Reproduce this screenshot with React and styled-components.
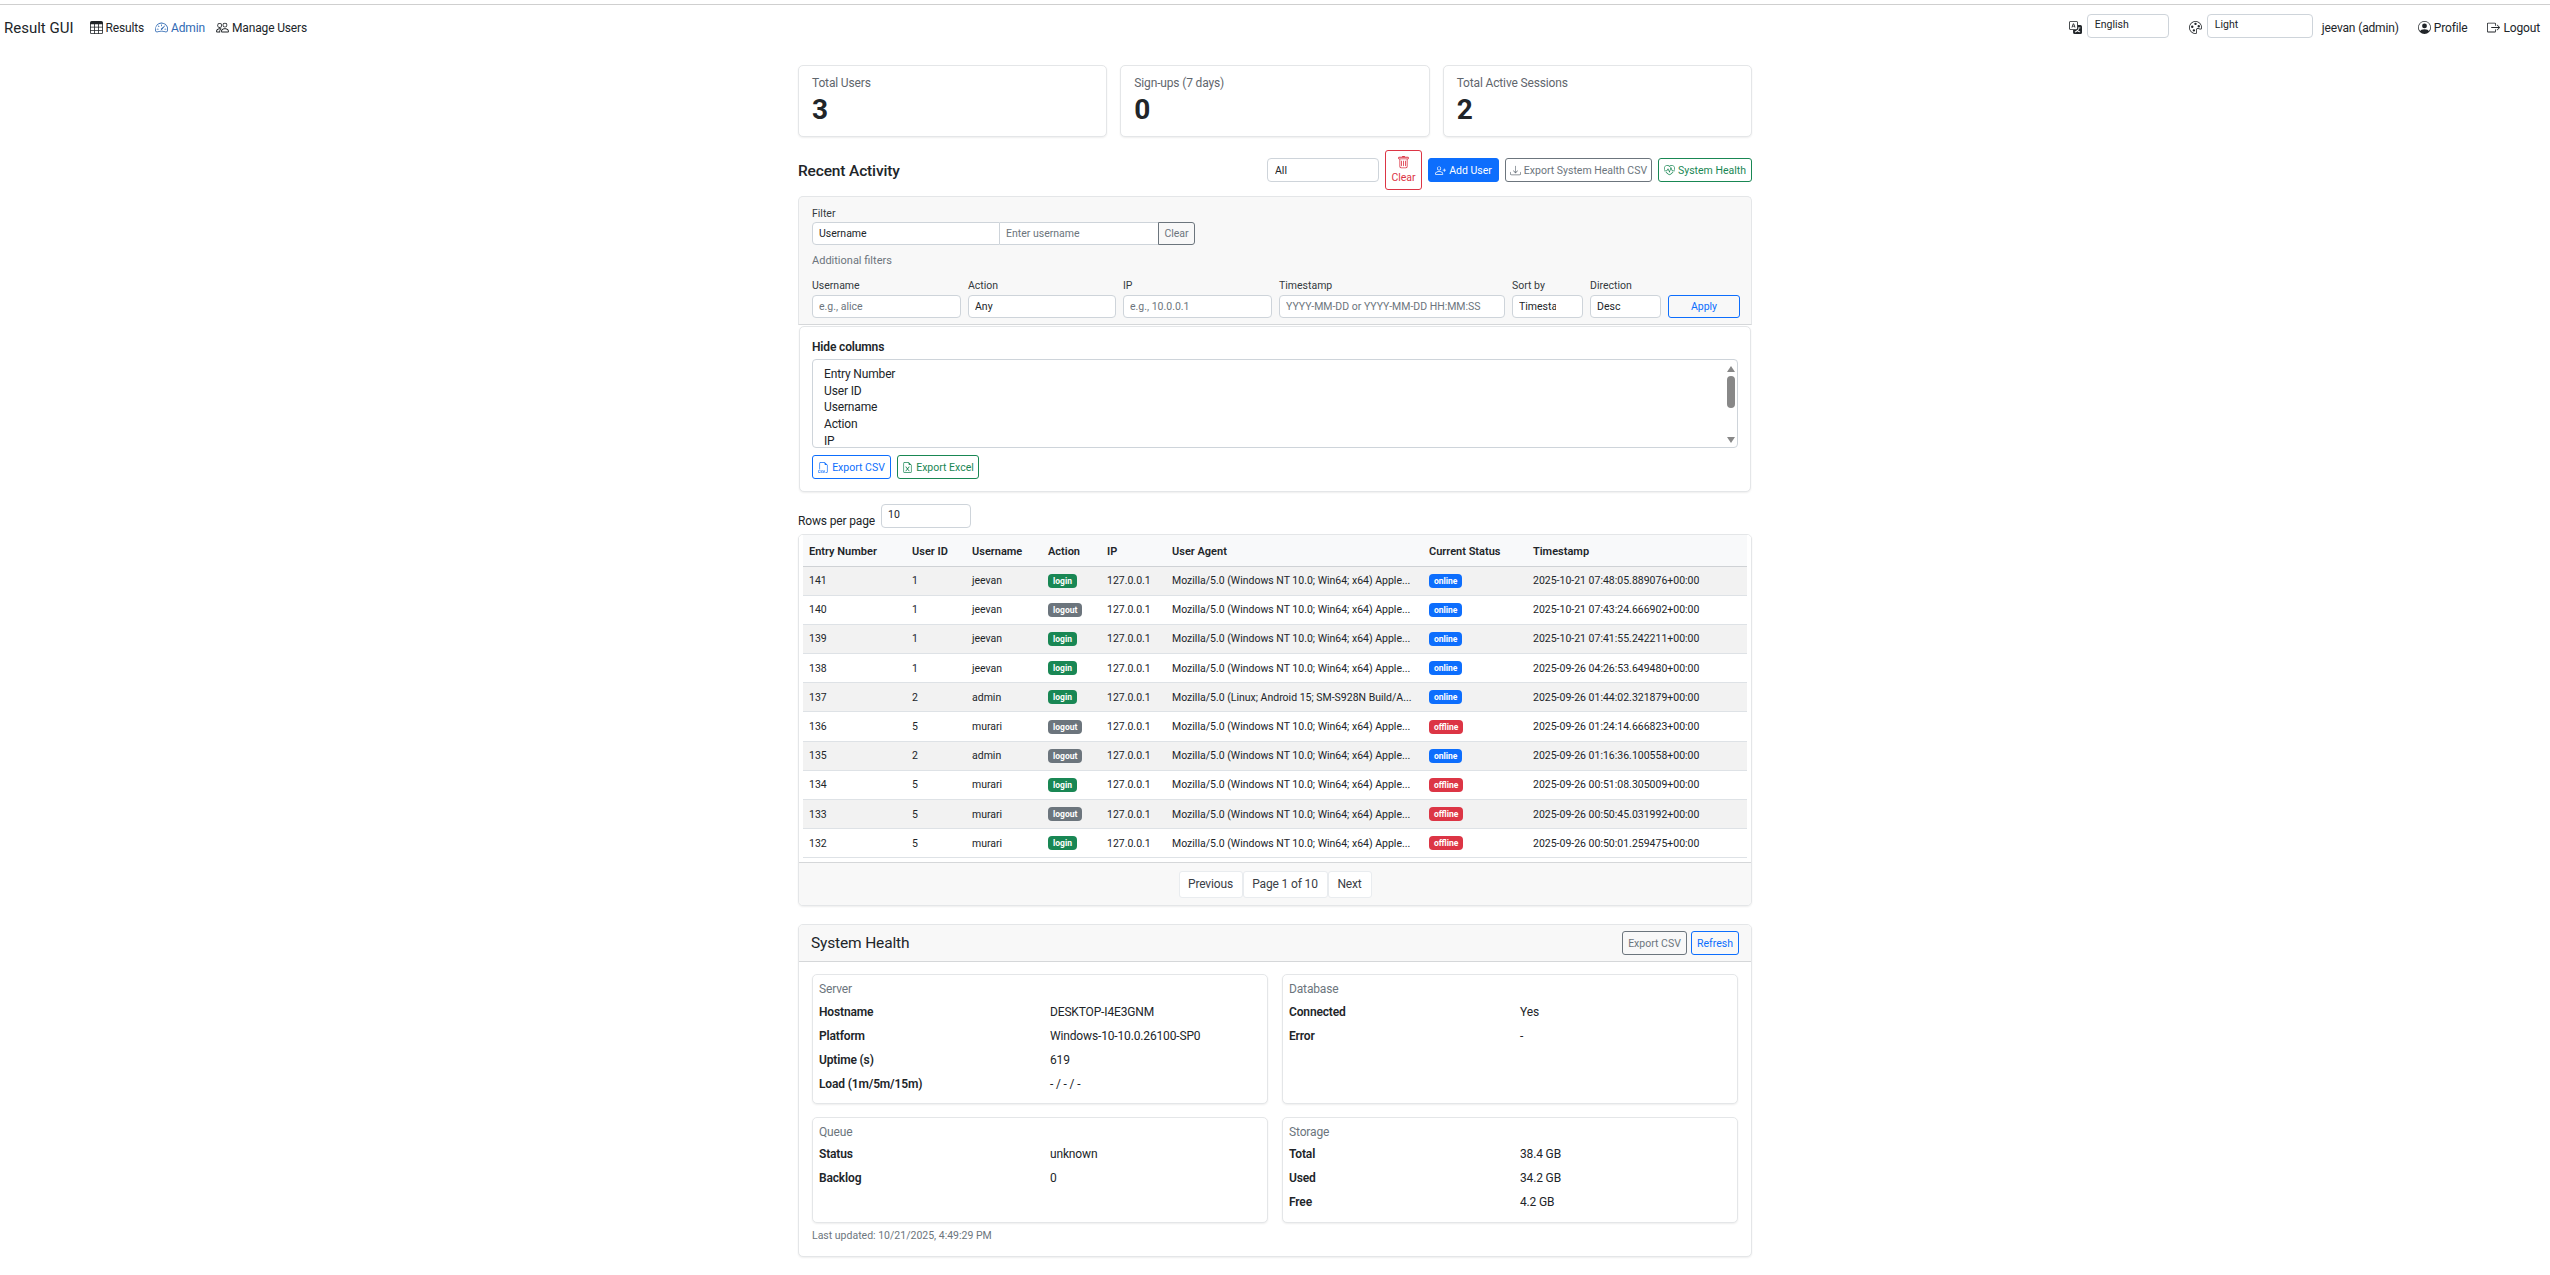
import React from "react";
import styled, { createGlobalStyle } from "styled-components";
import {
  BsTable, BsSpeedometer2, BsPeople, BsTranslate, BsPalette, BsPersonCircle, BsBoxArrowRight,
  BsTrash, BsPersonPlus, BsDownload, BsHeartPulse, BsFiletypeCsv, BsFileEarmarkExcel,
} from "react-icons/bs";

const GlobalStyle = createGlobalStyle`
  body {
    margin: 0;
    background: #fff;
    color: #212529;
    font-family: Roboto, "Noto Sans", sans-serif;
    font-size: 12px;
    letter-spacing: -0.15px;
  }
  input, select, button { font-family: inherit; }
  input::placeholder { color: #6c757d; opacity: 1; }
`;

const Page = styled.div`
  padding-top: 4px;
  padding-bottom: 19px;
`;

const Navbar = styled.nav`
  height: 45px;
  border-top: 1px solid #cfcfcf;
  display: flex;
  align-items: center;
  justify-content: space-between;
  padding: 0 10px 0 4px;
`;

const NavGroup = styled.div`
  display: flex;
  align-items: center;
`;

const Brand = styled.span`
  font-size: 15px;
  letter-spacing: 0;
  margin-right: 16px;
`;

const NavLink = styled.span`
  display: flex;
  align-items: center;
  gap: 3px;
  color: ${(p) => (p.$active ? "#2f69b3" : "#212529")};
  margin-right: ${(p) => p.$gap ?? 11}px;
  svg { width: 13px; height: 13px; }
`;

const NavSelect = styled.select`
  appearance: none;
  width: ${(p) => p.$w}px;
  height: 24px;
  margin: 0 ${(p) => p.$after}px 4px 5px;
  padding: 0 7px 2px;
  background: #fff;
  border: 1px solid #ced4da;
  border-radius: 4px;
  color: #212529;
  font-size: 10.5px;
`;

const Container = styled.main`
  width: 954px;
  margin: 15px auto 0;
`;

const StatRow = styled.section`
  display: grid;
  grid-template-columns: repeat(3, 1fr);
  gap: 13px;
`;

const Card = styled.div`
  background: #fff;
  border: 1px solid #e4e6e8;
  border-radius: 5px;
  box-shadow: 0 1px 2px rgba(0, 0, 0, 0.07);
`;

const StatCard = styled(Card)`
  height: 72px;
  padding: 8px 13px;
  box-sizing: border-box;
`;

const StatLabel = styled.div`
  color: #5f666d;
  line-height: 18px;
`;

const StatValue = styled.div`
  font-size: 28px;
  font-weight: 700;
  line-height: 32px;
  margin-top: 2px;
`;

const HeadingRow = styled.div`
  display: flex;
  align-items: center;
  justify-content: space-between;
  height: 40px;
  margin-top: 13px;
`;

const Heading = styled.h2`
  margin: 0;
  padding-top: 2px;
  font-size: 15.5px;
  font-weight: 500;
`;

const Actions = styled.div`
  display: flex;
  align-items: center;
  gap: ${(p) => p.$gap ?? 6}px;
`;

const colors = { primary: "#0d6efd", secondary: "#6c757d", success: "#198754", danger: "#dc3545" };

const Button = styled.button`
  display: inline-flex;
  align-items: center;
  justify-content: center;
  gap: 3px;
  box-sizing: border-box;
  width: ${(p) => (p.$w ? `${p.$w}px` : "auto")};
  height: ${(p) => p.$h ?? 24}px;
  padding: 0;
  background: ${(p) => (p.$solid ? colors[p.$kind] : "transparent")};
  border: 1px solid ${(p) => colors[p.$kind]};
  border-radius: 3px;
  color: ${(p) => (p.$solid ? "#fff" : colors[p.$kind])};
  font-size: 10.5px;
  letter-spacing: 0;
  white-space: nowrap;
  svg { width: 11px; height: 11px; flex: none; }
`;

const StackButton = styled(Button)`
  flex-direction: column;
  gap: 2px;
  svg { width: 13px; height: 13px; }
`;

const ActionSelect = styled.select`
  appearance: none;
  width: 112px;
  height: 24px;
  padding: 0 7px;
  background: #fff;
  border: 1px solid #ced4da;
  border-radius: 4px;
  color: #212529;
  font-size: 10.5px;
`;

const FilterPanel = styled.section`
  height: 129px;
  margin-top: 6px;
  padding: 9px 13px 0;
  box-sizing: border-box;
  background: #f8f8f8;
  border: 1px solid #e4e6e8;
  border-bottom-color: #d5d7d9;
  border-radius: 5px 5px 0 0;
`;

const FieldLabel = styled.label`
  display: block;
  font-size: 10.5px;
  letter-spacing: 0;
  line-height: 16px;
  color: #343a40;
`;

const InputGroup = styled.div`
  display: flex;
  width: 383px;
  height: 23px;
`;

const fieldCss = `
  box-sizing: border-box;
  height: 100%;
  min-width: 0;
  padding: 0 6px;
  background: #fff;
  border: 1px solid #ced4da;
  color: #212529;
  font-size: 10.5px;
  letter-spacing: 0;
  outline: none;
`;

const GroupSelect = styled.select`
  ${fieldCss}
  appearance: none;
  width: 188px;
  border-radius: 4px 0 0 4px;
`;

const GroupInput = styled.input`
  ${fieldCss}
  width: 158px;
  border-left: 0;
  border-right: 0;
`;

const GroupButton = styled(Button)`
  width: 37px;
  height: 23px;
  border-radius: 0 3px 3px 0;
`;

const SubLabel = styled.div`
  margin-top: 8px;
  line-height: 16px;
  color: #6c757d;
  font-size: 11px;
  letter-spacing: 0;
`;

const FilterGrid = styled.div`
  display: grid;
  grid-template-columns: 149px 148px 149px 226px 71px 71px 72px;
  column-gap: 7px;
  margin-top: 9px;
  align-items: end;
`;

const FilterInput = styled.input`
  ${fieldCss}
  display: block;
  width: 100%;
  height: 23px;
  margin-top: 1px;
  border-radius: 4px;
`;

const FilterSelect = styled.select`
  ${fieldCss}
  appearance: none;
  display: block;
  width: 100%;
  height: 23px;
  margin-top: 1px;
  border-radius: 4px;
  padding-right: ${(p) => p.$pr ?? 6}px;
`;

const ColumnsCard = styled(Card)`
  height: 166px;
  margin: 1px 1px 0;
  padding: 12px 12px 0;
  box-sizing: border-box;
`;

const ColumnsTitle = styled.div`
  font-weight: 600;
  line-height: 16px;
`;

const ListBox = styled.div`
  display: flex;
  height: 89px;
  margin-top: 4px;
  box-sizing: border-box;
  overflow: hidden;
  border: 1px solid #ced4da;
  border-radius: 4px;
`;

const ListOptions = styled.div`
  flex: 1;
  padding: 6px 11px 0;
  line-height: 16.7px;
`;

const ScrollTrack = styled.div`
  display: flex;
  flex-direction: column;
  align-items: center;
  justify-content: space-between;
  width: 13px;
  padding: 6px 0 4px;
  box-sizing: border-box;
`;

const ScrollArrow = styled.div`
  width: 0;
  height: 0;
  border-left: 4px solid transparent;
  border-right: 4px solid transparent;
  border-${(p) => (p.$up ? "bottom" : "top")}: 6px solid #888;
`;

const ScrollThumb = styled.div`
  width: 8px;
  height: 32px;
  margin-bottom: 26px;
  background: #888;
  border-radius: 4px;
`;

const ExportRow = styled.div`
  display: flex;
  gap: 6px;
  margin-top: 7px;
`;

const RowsPerPage = styled.div`
  display: flex;
  align-items: flex-end;
  gap: 6px;
  margin-top: 12px;
  height: 24px;
`;

const RowsInput = styled.input`
  ${fieldCss}
  width: 90px;
  height: 24px;
  padding-bottom: 4px;
  border-radius: 4px;
`;

const TableCard = styled(Card)`
  margin-top: 6px;
  overflow: hidden;
`;

const TableWrap = styled.div`
  padding: 0 4px 4px;
  background: #fff;
  border-bottom: 1px solid #d5d7d9;
`;

const Table = styled.table`
  width: 100%;
  border-collapse: collapse;
  table-layout: fixed;
  font-size: 10.5px;
  letter-spacing: 0;
`;

const Th = styled.th`
  box-sizing: border-box;
  height: 31px;
  padding: 2px 6px 0;
  background: #f8f9fa;
  border-bottom: 1px solid #cfd2d5;
  font-size: 11px;
  font-weight: 600;
  text-align: left;
  white-space: nowrap;
`;

const Tr = styled.tr`
  background: ${(p) => (p.$striped ? "#f2f2f2" : "#fff")};
`;

const Td = styled.td`
  height: 29.2px;
  box-sizing: border-box;
  padding: 0 6px;
  border-bottom: 1px solid #dee2e6;
  white-space: nowrap;
  overflow: hidden;
`;

const Badge = styled.span`
  display: inline-block;
  height: 14px;
  padding: 0 5px;
  background: ${(p) => colors[p.$kind]};
  border-radius: 4px;
  color: #fff;
  font-size: 8.5px;
  font-weight: 700;
  line-height: 14px;
  vertical-align: middle;
`;

const TableFooter = styled.div`
  display: flex;
  justify-content: center;
  align-items: center;
  height: 42px;
  background: #f8f8f8;
`;

const PageItem = styled.span`
  display: flex;
  align-items: center;
  justify-content: center;
  width: ${(p) => p.$w}px;
  height: 27px;
  box-sizing: border-box;
  background: #fff;
  border: 1px solid #e9ecef;
  border-radius: 3px;
  color: #3a4046;
`;

const HealthCard = styled(Card)`
  margin-top: 18px;
  overflow: hidden;
`;

const HealthHeader = styled.div`
  display: flex;
  align-items: center;
  justify-content: space-between;
  height: 37px;
  padding: 0 12px;
  box-sizing: border-box;
  background: #f8f8f8;
  border-bottom: 1px solid #d5d7d9;
`;

const HealthTitle = styled.h3`
  margin: 0;
  font-size: 15.5px;
  font-weight: 400;
`;

const HealthBody = styled.div`
  padding: 12px 13px 13px;
`;

const HealthGrid = styled.div`
  display: grid;
  grid-template-columns: 1fr 1fr;
  grid-template-rows: 130px 106px;
  gap: 13px 14px;
`;

const InfoCard = styled(Card)`
  padding: 6px 6px 0;
  box-sizing: border-box;
`;

const InfoTitle = styled.div`
  color: #6c757d;
  line-height: 16px;
  margin-bottom: ${(p) => p.$mb}px;
`;

const InfoRow = styled.div`
  display: grid;
  grid-template-columns: 231px 1fr;
  line-height: 24px;
`;

const InfoKey = styled.span`
  font-weight: 600;
`;

const Updated = styled.div`
  margin-top: 6px;
  color: #6c757d;
  font-size: 10.5px;
  letter-spacing: 0;
  line-height: 14px;
`;

const colWidths = [103, 60, 76, 59, 65, 257, 104, 220];
const headers = ["Entry Number", "User ID", "Username", "Action", "IP", "User Agent", "Current Status", "Timestamp"];
const winUa = "Mozilla/5.0 (Windows NT 10.0; Win64; x64) Apple...";
const rows = [
  [141, 1, "jeevan", "login", winUa, "online", "2025-10-21 07:48:05.889076+00:00"],
  [140, 1, "jeevan", "logout", winUa, "online", "2025-10-21 07:43:24.666902+00:00"],
  [139, 1, "jeevan", "login", winUa, "online", "2025-10-21 07:41:55.242211+00:00"],
  [138, 1, "jeevan", "login", winUa, "online", "2025-09-26 04:26:53.649480+00:00"],
  [137, 2, "admin", "login", "Mozilla/5.0 (Linux; Android 15; SM-S928N Build/A...", "online", "2025-09-26 01:44:02.321879+00:00"],
  [136, 5, "murari", "logout", winUa, "offline", "2025-09-26 01:24:14.666823+00:00"],
  [135, 2, "admin", "logout", winUa, "online", "2025-09-26 01:16:36.100558+00:00"],
  [134, 5, "murari", "login", winUa, "offline", "2025-09-26 00:51:08.305009+00:00"],
  [133, 5, "murari", "logout", winUa, "offline", "2025-09-26 00:50:45.031992+00:00"],
  [132, 5, "murari", "login", winUa, "offline", "2025-09-26 00:50:01.259475+00:00"],
];

const badgeKind = { login: "success", logout: "secondary", online: "primary", offline: "danger" };

const healthCards = [
  { title: "Server", mb: 3, items: [["Hostname", "DESKTOP-I4E3GNM"], ["Platform", "Windows-10-10.0.26100-SP0"], ["Uptime (s)", "619"], ["Load (1m/5m/15m)", "- / - / -"]] },
  { title: "Database", mb: 3, items: [["Connected", "Yes"], ["Error", "-"]] },
  { title: "Queue", mb: 2, items: [["Status", "unknown"], ["Backlog", "0"]] },
  { title: "Storage", mb: 2, items: [["Total", "38.4 GB"], ["Used", "34.2 GB"], ["Free", "4.2 GB"]] },
];

export default function App() {
  return (
    <Page>
      <GlobalStyle />
      <Navbar>
        <NavGroup>
          <Brand>Result GUI</Brand>
          <NavLink><BsTable />Results</NavLink>
          <NavLink $active><BsSpeedometer2 />Admin</NavLink>
          <NavLink><BsPeople />Manage Users</NavLink>
        </NavGroup>
        <NavGroup>
          <BsTranslate size={13} />
          <NavSelect $w={82} $after={20}><option>English</option></NavSelect>
          <BsPalette size={13} />
          <NavSelect $w={106} $after={9}><option>Light</option></NavSelect>
          <NavLink $gap={19}>jeevan (admin)</NavLink>
          <NavLink $gap={20}><BsPersonCircle />Profile</NavLink>
          <NavLink $gap={0}><BsBoxArrowRight />Logout</NavLink>
        </NavGroup>
      </Navbar>
      <Container>
        <StatRow>
          <StatCard><StatLabel>Total Users</StatLabel><StatValue>3</StatValue></StatCard>
          <StatCard><StatLabel>Sign-ups (7 days)</StatLabel><StatValue>0</StatValue></StatCard>
          <StatCard><StatLabel>Total Active Sessions</StatLabel><StatValue>2</StatValue></StatCard>
        </StatRow>

        <HeadingRow>
          <Heading>Recent Activity</Heading>
          <Actions>
            <ActionSelect><option>All</option></ActionSelect>
            <StackButton $kind="danger" $w={37} $h={40}><BsTrash />Clear</StackButton>
            <Button $kind="primary" $solid $w={71}><BsPersonPlus />Add User</Button>
            <Button $kind="secondary" $w={147}><BsDownload />Export System Health CSV</Button>
            <Button $kind="success" $w={94}><BsHeartPulse />System Health</Button>
          </Actions>
        </HeadingRow>

        <FilterPanel>
          <FieldLabel>Filter</FieldLabel>
          <InputGroup>
            <GroupSelect><option>Username</option></GroupSelect>
            <GroupInput placeholder="Enter username" />
            <GroupButton $kind="secondary">Clear</GroupButton>
          </InputGroup>
          <SubLabel>Additional filters</SubLabel>
          <FilterGrid>
            <div><FieldLabel>Username</FieldLabel><FilterInput placeholder="e.g., alice" /></div>
            <div><FieldLabel>Action</FieldLabel><FilterSelect><option>Any</option></FilterSelect></div>
            <div><FieldLabel>IP</FieldLabel><FilterInput placeholder="e.g., 10.0.0.1" /></div>
            <div><FieldLabel>Timestamp</FieldLabel><FilterInput placeholder="YYYY-MM-DD or YYYY-MM-DD HH:MM:SS" /></div>
            <div><FieldLabel>Sort by</FieldLabel><FilterSelect $pr={26}><option>Timestamp</option></FilterSelect></div>
            <div><FieldLabel>Direction</FieldLabel><FilterSelect><option>Desc</option></FilterSelect></div>
            <Button $kind="primary" $h={23}>Apply</Button>
          </FilterGrid>
        </FilterPanel>

        <ColumnsCard>
          <ColumnsTitle>Hide columns</ColumnsTitle>
          <ListBox>
            <ListOptions>
              <div>Entry Number</div>
              <div>User ID</div>
              <div>Username</div>
              <div>Action</div>
              <div>IP</div>
            </ListOptions>
            <ScrollTrack>
              <ScrollArrow $up />
              <ScrollThumb />
              <ScrollArrow />
            </ScrollTrack>
          </ListBox>
          <ExportRow>
            <Button $kind="primary" $w={79}><BsFiletypeCsv />Export CSV</Button>
            <Button $kind="success" $w={82}><BsFileEarmarkExcel />Export Excel</Button>
          </ExportRow>
        </ColumnsCard>

        <RowsPerPage>
          Rows per page
          <RowsInput defaultValue="10" />
        </RowsPerPage>

        <TableCard>
          <TableWrap>
            <Table>
              <colgroup>
                {colWidths.map((w, i) => <col key={i} width={w} />)}
              </colgroup>
              <thead>
                <tr>{headers.map((h) => <Th key={h}>{h}</Th>)}</tr>
              </thead>
              <tbody>
                {rows.map((r, i) => (
                  <Tr key={r[0]} $striped={i % 2 === 0}>
                    <Td>{r[0]}</Td>
                    <Td>{r[1]}</Td>
                    <Td>{r[2]}</Td>
                    <Td><Badge $kind={badgeKind[r[3]]}>{r[3]}</Badge></Td>
                    <Td>127.0.0.1</Td>
                    <Td>{r[4]}</Td>
                    <Td><Badge $kind={badgeKind[r[5]]}>{r[5]}</Badge></Td>
                    <Td>{r[6]}</Td>
                  </Tr>
                ))}
              </tbody>
            </Table>
          </TableWrap>
          <TableFooter>
            <PageItem $w={64}>Previous</PageItem>
            <PageItem $w={85}>Page 1 of 10</PageItem>
            <PageItem $w={44}>Next</PageItem>
          </TableFooter>
        </TableCard>

        <HealthCard>
          <HealthHeader>
            <HealthTitle>System Health</HealthTitle>
            <Actions $gap={4}>
              <Button $kind="secondary" $w={65}>Export CSV</Button>
              <Button $kind="primary" $w={48}>Refresh</Button>
            </Actions>
          </HealthHeader>
          <HealthBody>
            <HealthGrid>
              {healthCards.map((c) => (
                <InfoCard key={c.title}>
                  <InfoTitle $mb={c.mb}>{c.title}</InfoTitle>
                  {c.items.map(([k, v]) => (
                    <InfoRow key={k}><InfoKey>{k}</InfoKey><span>{v}</span></InfoRow>
                  ))}
                </InfoCard>
              ))}
            </HealthGrid>
            <Updated>Last updated: 10/21/2025, 4:49:29 PM</Updated>
          </HealthBody>
        </HealthCard>
      </Container>
    </Page>
  );
}
